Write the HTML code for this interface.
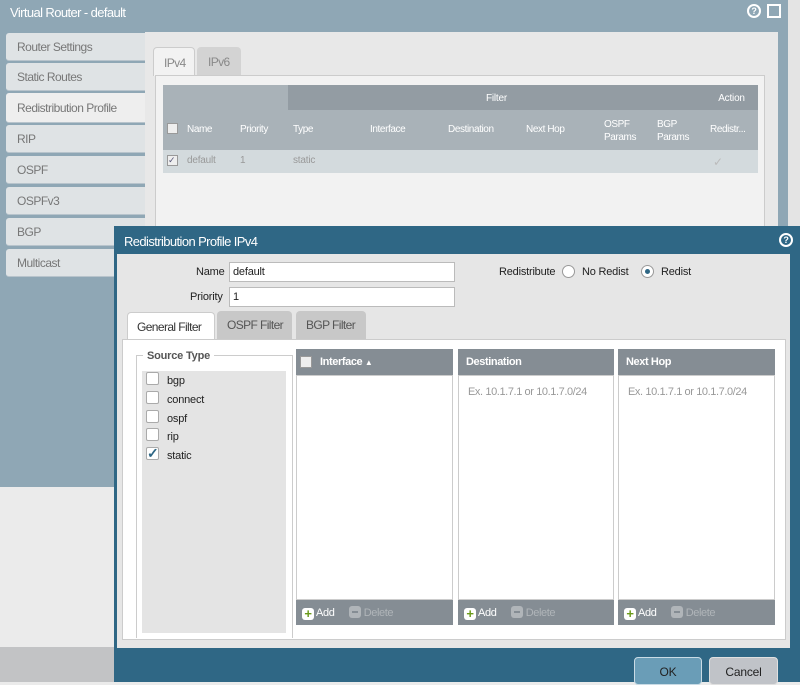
<!DOCTYPE html>
<html><head><style>
*{box-sizing:border-box;margin:0;padding:0;white-space:nowrap}
body{width:800px;height:682px;position:relative;overflow:hidden;background:#ebebeb;font-family:"Liberation Sans",sans-serif;font-size:11px;color:#222;letter-spacing:-0.2px}
.a{position:absolute}
.nav{position:absolute;left:6px;width:139px;height:28px;background:#dfe3e5;border-radius:3px 0 0 3px;color:#777;font-size:12px;padding:7px 11px;border-bottom:1px solid #b8c4cc;letter-spacing:-0.5px}
.gh{position:absolute;top:349px;height:26px;background:#858d94;color:#fff;font-weight:bold;font-size:11px;padding:7px 8px;letter-spacing:-0.4px}
.gb{position:absolute;top:375px;height:225px;background:#fff;color:#999;padding:10px 9px;letter-spacing:-0.4px}
.gf{position:absolute;top:600px;height:25px;background:#858d94;color:#fff;font-size:11px;padding:6px 6px;letter-spacing:-0.4px}
.plus{display:inline-block;width:12px;height:12px;background:#fff;border-radius:3px;color:#6a9a1a;font-weight:bold;text-align:center;line-height:12px;font-size:13px;vertical-align:-2px}
.minus{display:inline-block;width:12px;height:12px;background:#b0b5b9;border-radius:3px;vertical-align:-2px;margin-left:12px;position:relative}
.minus:after{content:"";position:absolute;left:3px;top:5px;width:6px;height:2px;background:#858d94}
.cb{position:absolute;left:146px;width:13px;height:13px;background:#fff;border:1px solid #aaa;border-radius:2px}
.lbl{position:absolute;left:167px;font-size:11px}
.tab{position:absolute;font-size:12px;letter-spacing:-0.6px;border-radius:4px 4px 0 0}
</style></head><body>
<div class="a" style="left:0;top:0;width:788px;height:487px;background:#8fa7b5"></div>
<div class="a" style="left:788px;top:0;width:12px;height:230px;background:#e4e4e4"></div>
<div class="a" style="left:0;top:647px;width:114px;height:35px;background:#c2c3c5"></div>
<div class="a" style="left:10px;top:5px;color:#fff;font-size:13px;letter-spacing:-0.6px">Virtual Router - default</div>
<div class="a" style="left:747px;top:4px;width:14px;height:14px;border:2px solid #fff;border-radius:50%;color:#fff;font-size:9px;text-align:center;line-height:10px;font-weight:bold">?</div>
<div class="a" style="left:767px;top:4px;width:14px;height:14px;border:2px solid #fff;background:#8fa7b5"></div>
<div class="a" style="left:145px;top:32px;width:633px;height:200px;background:#e8e8e8"></div>
<div class="nav" style="top:33px">Router Settings</div>
<div class="nav" style="top:63px">Static Routes</div>
<div class="nav" style="top:93px;height:30px;background:#eeeeee;padding-top:8px">Redistribution Profile</div>
<div class="nav" style="top:125px">RIP</div>
<div class="nav" style="top:156px">OSPF</div>
<div class="nav" style="top:187px">OSPFv3</div>
<div class="nav" style="top:218px">BGP</div>
<div class="nav" style="top:249px">Multicast</div>
<div class="tab" style="left:153px;top:47px;width:42px;height:29px;background:#f2f2f2;border:1px solid #ccc;border-bottom:none;color:#888;padding:8px 10px">IPv4</div>
<div class="tab" style="left:197px;top:47px;width:44px;height:28px;background:#d3d3d3;color:#888;padding:8px 11px">IPv6</div>
<div class="a" style="left:155px;top:75px;width:610px;height:160px;background:#f2f2f2;border:1px solid #ccc"></div>
<div class="a" style="left:163px;top:85px;width:595px;height:65px;background:#a9b2b8"></div>
<div class="a" style="left:288px;top:85px;width:417px;height:25px;background:#939ca3;color:#fff;text-align:center;padding-top:8px;font-size:10px">Filter</div>
<div class="a" style="left:705px;top:85px;width:53px;height:25px;background:#939ca3;color:#fff;text-align:center;padding-top:8px;font-size:10px">Action</div>
<div class="a" style="left:163px;top:110px;width:595px;height:40px;color:#fff;font-size:10px;letter-spacing:-0.4px">
<span class="a" style="left:4px;top:13px;width:11px;height:11px;background:#eee;border:1px solid #999"></span>
<span class="a" style="left:24px;top:14px">Name</span><span class="a" style="left:77px;top:14px">Priority</span><span class="a" style="left:130px;top:14px">Type</span><span class="a" style="left:207px;top:14px">Interface</span><span class="a" style="left:285px;top:14px">Destination</span><span class="a" style="left:363px;top:14px">Next Hop</span><span class="a" style="left:441px;top:8px;line-height:13px;white-space:normal">OSPF<br>Params</span><span class="a" style="left:494px;top:8px;line-height:13px;white-space:normal">BGP<br>Params</span><span class="a" style="left:547px;top:14px">Redistr...</span></div>
<div class="a" style="left:163px;top:150px;width:595px;height:23px;background:#d3dadd;color:#999;font-size:10px">
<span class="a" style="left:4px;top:5px;width:11px;height:11px;background:#eee;border:1px solid #999;color:#557;font-size:9px;line-height:9px">✓</span>
<span class="a" style="left:24px;top:5px">default</span><span class="a" style="left:77px;top:5px">1</span><span class="a" style="left:130px;top:5px">static</span>
<span class="a" style="left:550px;top:5px;color:#bbb;font-size:12px">✓</span></div>

<!-- dialog -->
<div class="a" style="left:114px;top:226px;width:686px;height:456px;background:#2f6785"></div>
<div class="a" style="left:124px;top:234px;color:#fff;font-size:13px;letter-spacing:-0.6px">Redistribution Profile IPv4</div>
<div class="a" style="left:779px;top:233px;width:14px;height:14px;border:2px solid #fff;border-radius:50%;color:#fff;font-size:9px;text-align:center;line-height:10px;font-weight:bold">?</div>
<div class="a" style="left:117px;top:254px;width:673px;height:394px;background:#e6e6e6"></div>
<div class="a" style="left:196px;top:266px">Name</div>
<div class="a" style="left:229px;top:262px;width:226px;height:20px;background:#fff;border:1px solid #bbb;padding:3px 3px">default</div>
<div class="a" style="left:190px;top:291px">Priority</div>
<div class="a" style="left:229px;top:287px;width:226px;height:20px;background:#fff;border:1px solid #bbb;padding:3px 3px">1</div>
<div class="a" style="left:499px;top:266px">Redistribute</div>
<div class="a" style="left:562px;top:265px;width:13px;height:13px;border:1px solid #999;border-radius:50%;background:#fff"></div>
<div class="a" style="left:582px;top:266px">No Redist</div>
<div class="a" style="left:641px;top:265px;width:13px;height:13px;border:1px solid #999;border-radius:50%;background:#fff"><div class="a" style="left:3px;top:3px;width:5px;height:5px;border-radius:50%;background:#2f6785"></div></div>
<div class="a" style="left:661px;top:266px">Redist</div>
<div class="tab" style="left:127px;top:312px;width:88px;height:28px;background:#fff;border:1px solid #ccc;border-bottom:none;padding:7px 9px;color:#333">General Filter</div>
<div class="tab" style="left:217px;top:311px;width:75px;height:28px;background:#c8c8c8;padding:7px 10px;color:#555">OSPF Filter</div>
<div class="tab" style="left:296px;top:311px;width:70px;height:28px;background:#c8c8c8;padding:7px 10px;color:#555">BGP Filter</div>
<div class="a" style="left:122px;top:339px;width:664px;height:301px;background:#fff;border:1px solid #ccc"></div>
<div class="a" style="left:136px;top:355px;width:157px;height:283px;border:1px solid #ccc;border-bottom:none"></div>
<div class="a" style="left:143px;top:350px;background:#fff;padding:0 4px;color:#555;font-weight:bold;font-size:11px">Source Type</div>
<div class="a" style="left:142px;top:371px;width:144px;height:262px;background:#e4e4e4"></div>
<div class="cb" style="top:372px"></div><div class="lbl" style="top:375px">bgp</div>
<div class="cb" style="top:391px"></div><div class="lbl" style="top:394px">connect</div>
<div class="cb" style="top:410px"></div><div class="lbl" style="top:413px">ospf</div>
<div class="cb" style="top:428px"></div><div class="lbl" style="top:431px">rip</div>
<div class="cb" style="top:447px;color:#2f6785;font-size:14px;line-height:11px;font-weight:bold">✓</div><div class="lbl" style="top:450px">static</div>

<div class="gh" style="left:296px;width:157px;padding-left:24px">Interface <span style="font-size:8px">▲</span></div>
<div class="a" style="left:300px;top:356px;width:12px;height:12px;background:#eee;border:1px solid #999"></div>
<div class="gb" style="left:296px;width:157px;border:1px solid #ccc"></div>
<div class="gf" style="left:296px;width:157px"><span class="plus">+</span> Add <span class="minus"></span> <span style="color:#b0b5b9">Delete</span></div>
<div class="gh" style="left:458px;width:156px">Destination</div>
<div class="gb" style="left:458px;width:156px;border:1px solid #ccc">Ex. 10.1.7.1 or 10.1.7.0/24</div>
<div class="gf" style="left:458px;width:156px"><span class="plus">+</span> Add <span class="minus"></span> <span style="color:#b0b5b9">Delete</span></div>
<div class="gh" style="left:618px;width:157px">Next Hop</div>
<div class="gb" style="left:618px;width:157px;border:1px solid #ccc">Ex. 10.1.7.1 or 10.1.7.0/24</div>
<div class="gf" style="left:618px;width:157px"><span class="plus">+</span> Add <span class="minus"></span> <span style="color:#b0b5b9">Delete</span></div>

<div class="a" style="left:634px;top:657px;width:68px;height:28px;background:#6a9db7;border:1px solid #c9dbe5;border-radius:4px;text-align:center;padding-top:7px;font-size:12px">OK</div>
<div class="a" style="left:709px;top:657px;width:69px;height:28px;background:#c0c3c8;border:1px solid #e0e0e0;border-radius:4px;text-align:center;padding-top:7px;font-size:12px">Cancel</div>
</body></html>
